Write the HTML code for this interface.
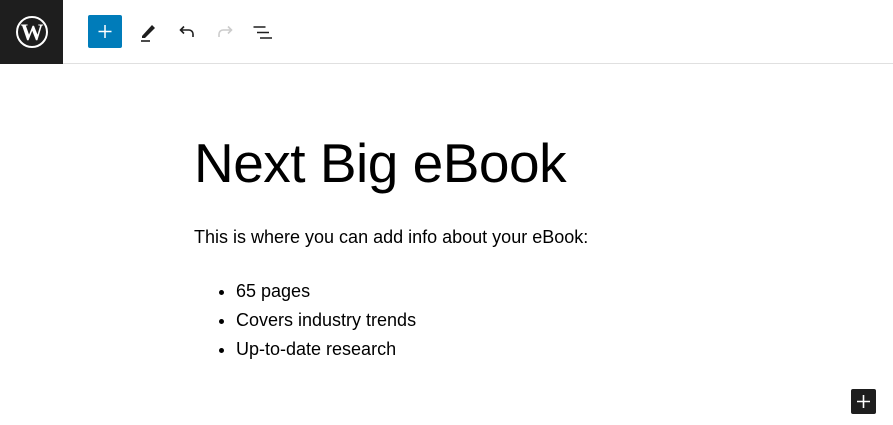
<!DOCTYPE html>
<html><head><style>
body{margin:0;width:893px;height:425px;background:#fff;font-family:"Liberation Sans",sans-serif;color:#1e1e1e;position:relative;overflow:hidden}
.hdr{position:absolute;left:0;top:0;width:893px;height:63px;border-bottom:1px solid #e0e0e0}
.logo{position:absolute;left:0;top:0;width:63px;height:64px;background:#1e1e1e}
.add{position:absolute;left:88px;top:15px;width:34px;height:33px;background:#007cba;border-radius:2px}
svg{position:absolute}
h1{position:absolute;left:194px;top:128px;margin:0;font-weight:400;font-size:55px;letter-spacing:-0.5px;line-height:70px;color:#000}
p{position:absolute;left:194px;top:227px;margin:0;font-size:18px;color:#000}
ul{position:absolute;left:194px;top:277px;margin:0;padding-left:42px;font-size:18px;line-height:29px;color:#000}
.bt{position:absolute;left:851px;top:389px;width:25px;height:25px;background:#1e1e1e;border-radius:2px}
</style></head><body>
<div class="hdr"></div>
<div class="logo"><svg width="32" height="32" viewBox="0 0 32 32" style="left:16px;top:16px"><circle cx="16" cy="16" r="15" fill="none" stroke="#fff" stroke-width="2"/><text x="16" y="24" text-anchor="middle" font-family="Liberation Serif" font-weight="bold" font-size="23" fill="#fff">W</text></svg></div>
<div class="add"><svg width="34" height="33" style="left:0;top:0"><path d="M17 10v13M10.5 16.5h13" stroke="#fff" stroke-width="1.5"/></svg></div>
<svg width="24" height="24" style="left:137px;top:20px"><path d="M5 16 L15 5 l3 3 L8 18 H5z" fill="#1e1e1e"/><path d="M4 21h9" stroke="#1e1e1e" stroke-width="1.6"/></svg>
<svg width="24" height="24" style="left:175px;top:20px"><path d="M18 17v-3a4 4 0 0 0-4-4H6M9 6.5 5.5 10 9 13.5" fill="none" stroke="#1e1e1e" stroke-width="1.6"/></svg>
<svg width="24" height="24" style="left:213px;top:20px"><path d="M6 17v-3a4 4 0 0 1 4-4h8M15 6.5 18.5 10 15 13.5" fill="none" stroke="#ccc" stroke-width="1.6"/></svg>
<svg width="24" height="24" style="left:251px;top:20px"><path d="M2.5 7h12M6 12.5h12M9 18h12" stroke="#1e1e1e" stroke-width="1.6"/></svg>
<h1>Next Big eBook</h1>
<p>This is where you can add info about your eBook:</p>
<ul><li>65 pages</li><li>Covers industry trends</li><li>Up-to-date research</li></ul>
<div class="bt"><svg width="25" height="25" style="left:0;top:0"><path d="M12.5 6v13M6 12.5h13" stroke="#fff" stroke-width="1.6"/></svg></div>
</body></html>
